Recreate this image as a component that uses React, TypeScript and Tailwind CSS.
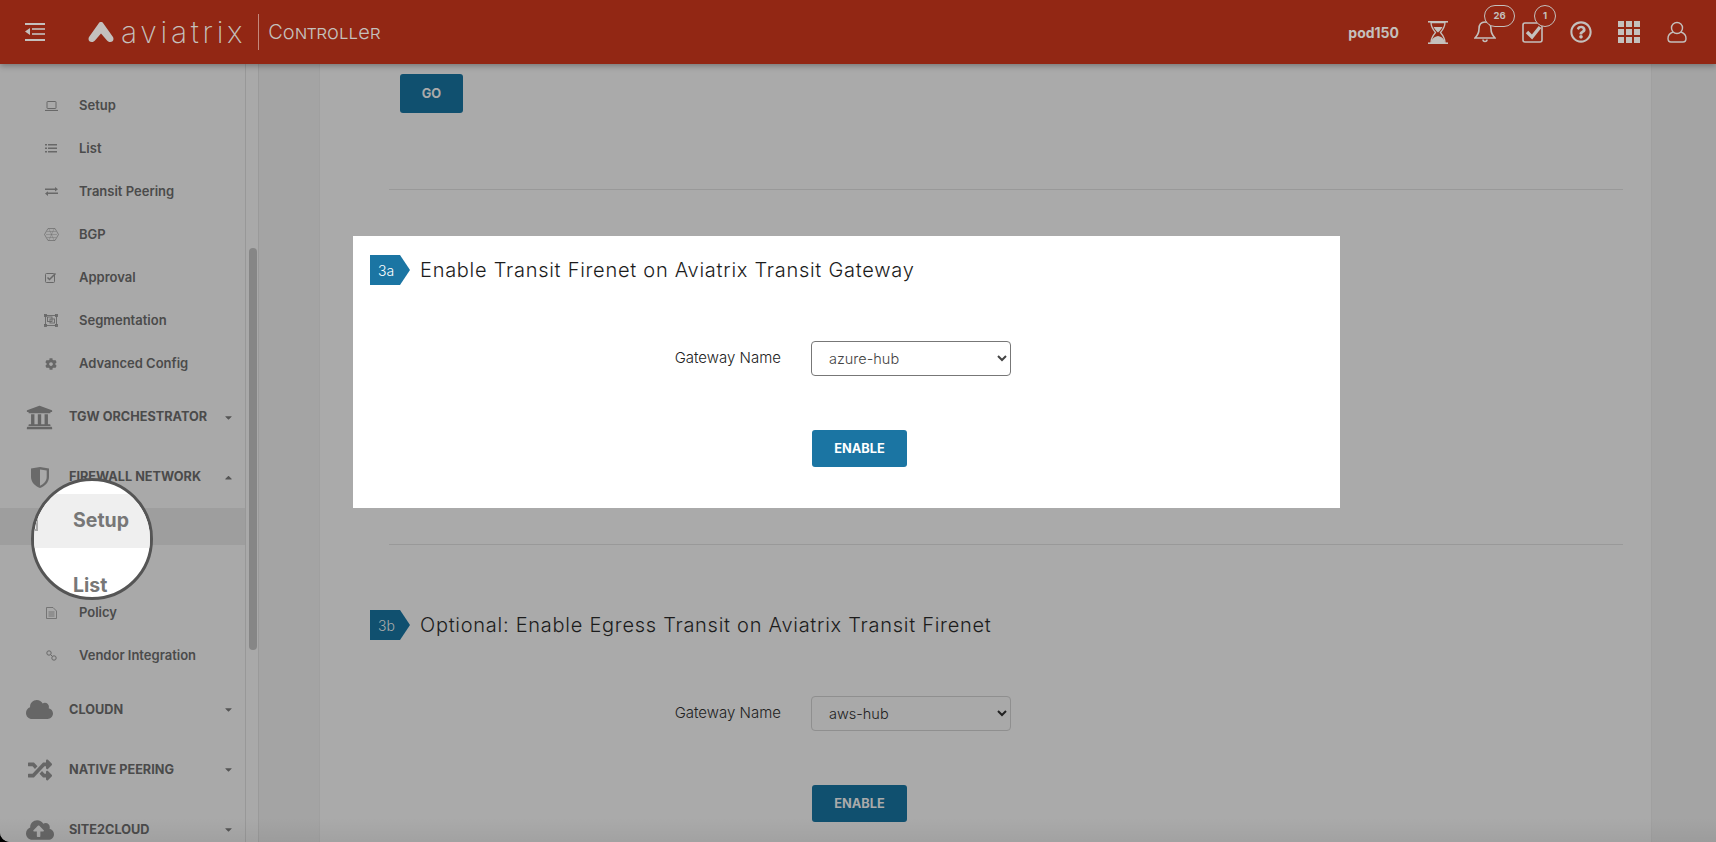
// Aviatrix Controller: Firewall Network setup, step 3a spotlighted
import type { ReactNode } from 'react'
import { FaCaretDown, FaCaretUp, FaCloud, FaCloudUploadAlt, FaCog, FaRandom, FaRegQuestionCircle, FaUniversity } from 'react-icons/fa'

function LaptopIcon() {
  return (
    <svg width="13" height="10" viewBox="0 0 13 10" fill="none" stroke="currentColor">
      <rect x="2" y="0.5" width="9" height="7" rx="0.5" />
      <path d="M0 9.500h13" strokeWidth="1.2" />
    </svg>
  )
}

function ListIcon() {
  return (
    <svg width="12" height="9" viewBox="0 0 12 9" fill="currentColor">
      <rect x="0" y="0" width="2" height="1.500" />
      <rect x="3" y="0" width="9" height="1.500" />
      <rect x="0" y="3.500" width="2" height="1.500" />
      <rect x="3" y="3.500" width="9" height="1.500" />
      <rect x="0" y="7" width="2" height="1.500" />
      <rect x="3" y="7" width="9" height="1.500" />
    </svg>
  )
}

function SwapIcon() {
  return (
    <svg width="13" height="9" viewBox="0 0 13 9" fill="currentColor">
      <path d="M0 1.500h10V0l3 2.200-3 2.200V3H0zM13 5.500H3V4.200L0 6.500 3 9V7h10z" />
    </svg>
  )
}

function HexIcon() {
  return (
    <svg width="15" height="13" viewBox="0 0 15 13" fill="none" stroke="currentColor" strokeWidth="0.7">
      <path d="M4 .5h7l3.500 6-3.500 6H4L.5 6.500z" />
      <path d="M3 3.500h9M2 6.500h11M3 9.500h9M5 1l5 11M10 1L5 12" opacity="0.55" />
    </svg>
  )
}

function ApprovalIcon() {
  return (
    <svg width="12" height="11" viewBox="0 0 12 11" fill="none" stroke="currentColor">
      <rect x="0.5" y="1.500" width="9" height="9" rx="1" />
      <path d="M2.500 5.500l2 2L10.500 1.500" strokeWidth="1.500" />
    </svg>
  )
}

function SegmentIcon() {
  return (
    <svg width="14" height="13" viewBox="0 0 14 13" fill="none" stroke="currentColor" strokeWidth="0.9">
      <rect x="1.500" y="1.500" width="11" height="10" />
      <rect x="0.500" y="0.500" width="2" height="2" />
      <rect x="11.500" y="0.500" width="2" height="2" />
      <rect x="0.500" y="10.500" width="2" height="2" />
      <rect x="11.500" y="10.500" width="2" height="2" />
      <rect x="3.500" y="3" width="4.500" height="4.500" />
      <rect x="6" y="5" width="4.500" height="4" />
    </svg>
  )
}

function PolicyIcon() {
  return (
    <svg width="11" height="12" viewBox="0 0 11 12" fill="none" stroke="currentColor" strokeWidth="0.8">
      <path d="M.5.500h6.500l3.500 3.500v7.500H.5z" />
      <path d="M2.500 5h6M2.500 7h6M2.500 9h6" />
    </svg>
  )
}

function ChainIcon() {
  return (
    <svg width="11" height="11" viewBox="0 0 11 11" fill="none" stroke="currentColor">
      <circle cx="3" cy="3" r="2.200" />
      <circle cx="8" cy="8" r="2.200" />
      <path d="M4.500 4.500l2 2" />
    </svg>
  )
}

function ShieldIcon() {
  return (
    <svg width="18" height="21" viewBox="0 0 18 21">
      <path d="M0 1.500C3 1 6 .5 9 0c3 .5 6 1 9 1.500V10c0 5-4 9-9 11-5-2-9-6-9-11z" fill="#6a6a6a" />
      <path d="M9 2.500c2.300.3 4.500.7 6.700 1V10c0 4-3 7-6.700 8.700z" fill="#a9a9a9" />
    </svg>
  )
}

function HourglassIcon() {
  return (
    <svg width="20" height="23" viewBox="0 0 20 23" fill="currentColor">
      <rect x="0" y="0" width="20" height="1.600" />
      <rect x="0" y="21.400" width="20" height="1.600" />
      <path d="M3 1.500h14c0 4.500-2 7-4.500 10 2.500 3 4.500 5.500 4.500 10H3c0-4.500 2-7 4.500-10C5 8.500 3 6 3 1.500z" fill="none" stroke="currentColor" strokeWidth="1.300" />
      <path d="M5.500 6h9c-.8 1.800-2.600 3.700-4.500 5.500C8.100 9.700 6.300 7.800 5.500 6zM3.500 21c.2-2.800 1.500-4.800 6.500-6 5 1.200 6.300 3.200 6.500 6z" />
    </svg>
  )
}

function SubItem({ icon, label }: { icon: ReactNode; label: string }) {
  return (
    <div className="flex h-[43px] items-center">
      <span className="flex w-[79px] justify-center pl-[23px] text-[#686868]">{icon}</span>
      <span className="text-[13px] font-semibold text-[#4b4b4b]">{label}</span>
    </div>
  )
}

function GroupItem({ icon, label, open }: { icon: ReactNode; label: string; open?: boolean }) {
  return (
    <div className="flex h-[60px] items-center">
      <span className="flex w-[69px] justify-center pl-[10px] text-[#666]">{icon}</span>
      <span className="flex-1 text-[12.7px] font-bold text-[#4b4b4b]">{label}</span>
      <span className="mr-[11px] text-[#555]">{open ? <FaCaretUp size={11} /> : <FaCaretDown size={11} />}</span>
    </div>
  )
}

function Sidebar() {
  return (
    <aside className="h-full w-[246px] shrink-0 border-r border-[#989898] bg-[#a9a9a9] pt-[20px]">
      <SubItem icon={<LaptopIcon />} label="Setup" />
      <SubItem icon={<ListIcon />} label="List" />
      <SubItem icon={<SwapIcon />} label="Transit Peering" />
      <SubItem icon={<HexIcon />} label="BGP" />
      <SubItem icon={<ApprovalIcon />} label="Approval" />
      <SubItem icon={<SegmentIcon />} label="Segmentation" />
      <SubItem icon={<FaCog size={12} />} label="Advanced Config" />
      <div className="h-[2px]" />
      <GroupItem icon={<FaUniversity size={27} />} label="TGW ORCHESTRATOR" />
      <GroupItem icon={<ShieldIcon />} label="FIREWALL NETWORK" open />
      <div className="-mt-[2px] flex h-[43px] items-center">
        <div className="h-[37px] w-full bg-[#9e9e9e]" />
      </div>
      {/* the List row sits under the magnifier */}
      <div className="h-[43px]" />
      <SubItem icon={<PolicyIcon />} label="Policy" />
      <SubItem icon={<ChainIcon />} label="Vendor Integration" />
      <div className="h-[2.5px]" />
      <GroupItem icon={<FaCloud size={27} />} label="CLOUDN" />
      <GroupItem icon={<FaRandom size={24} />} label="NATIVE PEERING" />
      <GroupItem icon={<FaCloudUploadAlt size={28} />} label="SITE2CLOUD" />
    </aside>
  )
}

function Magnifier() {
  return (
    <div className="absolute left-[31px] top-[478px] z-20 h-[122px] w-[122px] overflow-hidden rounded-full border-[3px] border-[#555] bg-white">
      <div className="mt-[13px] flex h-[54px] items-center bg-[#efefef] pl-[39px] pb-[1px] text-[19.5px] font-bold text-[#777]">
        Setup
      </div>
      <div className="mt-[23px] pl-[39px] text-[19.5px] font-bold text-[#777]">List</div>
      <span className="absolute left-[-6px] top-[30px] h-[20px] w-[10px] border-r-2 border-b-2 border-[#aaa]" />
    </div>
  )
}

function StepHeader({ step, title, dim }: { step: string; title: string; dim?: boolean }) {
  return (
    <div className="flex h-[30px] items-center">
      <span
        className={`flex h-[30px] w-[40px] items-center pl-[8px] text-[14px] font-light [clip-path:polygon(0_0,75%_0,100%_50%,75%_100%,0_100%)] ${
          dim ? 'bg-[#10506f] text-[#aaa]' : 'bg-[#1b75a3] text-white'
        }`}
      >
        {step}
      </span>
      <h2 className="ml-[10px] text-[20px] font-light tracking-[0.73px] text-[#1c1c1c]">{title}</h2>
    </div>
  )
}

function GatewayRow({ value, dim }: { value: string; dim?: boolean }) {
  return (
    <div className="flex h-[35px] items-center">
      <label className="w-[411px] text-right text-[15px] font-light text-[#222]">Gateway Name</label>
      <select
        defaultValue={value}
        className={`ml-[30px] h-[35px] w-[200px] rounded-[4px] border pl-[13px] text-[14.5px] font-light ${
          dim ? 'border-[#8f8f8f] bg-[#a9a9a9] text-[#222]' : 'border-[#777] bg-white text-[#444]'
        }`}
      >
        <option>{value}</option>
      </select>
    </div>
  )
}

function EnableButton({ dim }: { dim?: boolean }) {
  return (
    <button
      className={`ml-[442px] block h-[37px] w-[95px] rounded-[3px] text-[12.8px] font-bold ${
        dim ? 'bg-[#10506f] text-[#aaa]' : 'bg-[#1b75a3] text-white'
      }`}
    >
      ENABLE
    </button>
  )
}

function Main() {
  return (
    <main className="h-full flex-1 bg-[#a4a4a4] pl-[60px] pr-[64px]">
      <div className="h-full overflow-hidden border-x border-[#a0a0a0] bg-[#aaaaaa] pl-[33px] pt-[10px]">
        <button className="ml-[47px] block h-[39px] w-[63px] rounded-[3px] bg-[#10506f] pt-[1px] text-[12.8px] font-bold text-[#aaa]">
          GO
        </button>
        <hr className="ml-[36px] mt-[76px] w-[1234px] border-[#999]" />
        <section className="relative z-10 mt-[46px] h-[272px] w-[987px] bg-white px-[17px] pt-[19px]">
          <StepHeader step="3a" title="Enable Transit Firenet on Aviatrix Transit Gateway" />
          <div className="mt-[56px]">
            <GatewayRow value="azure-hub" />
          </div>
          <div className="mt-[54px]">
            <EnableButton />
          </div>
        </section>
        <hr className="ml-[36px] mt-[36px] w-[1234px] border-[#999]" />
        <section className="mt-[65px] px-[17px]">
          <StepHeader step="3b" title="Optional: Enable Egress Transit on Aviatrix Transit Firenet" dim />
          <div className="mt-[56px]">
            <GatewayRow value="aws-hub" dim />
          </div>
          <div className="mt-[54px]">
            <EnableButton dim />
          </div>
        </section>
      </div>
    </main>
  )
}

function Header() {
  return (
    <header className="relative z-30 flex h-[64px] shrink-0 items-center bg-[#922714] text-[#c4c0bd] shadow-[0_2px_6px_rgba(0,0,0,0.3)]">
      <svg width="20" height="18" viewBox="0 0 20 18" className="ml-[25px]" fill="currentColor">
        <rect y="0" width="20" height="2" />
        <rect x="7" y="5.200" width="13" height="1.600" />
        <rect x="7" y="10.200" width="13" height="1.600" />
        <rect y="16" width="20" height="2" />
        <path d="M5 5v7L0 8.500z" />
      </svg>
      <svg width="26" height="20" viewBox="0 0 26 20" className="ml-[43px]" fill="currentColor">
        <path d="M13 0c1 0 1.800.5 2.400 1.400l9.400 13.400c1.600 2.400.2 5.200-2.600 5.200-1.500 0-2.400-.6-3.400-1.800L13 11.600l-5.800 6.600C6.200 19.400 5.300 20 3.800 20 1 20-.4 17.200 1.200 14.800l9.400-13.400C11.200.5 12 0 13 0z" />
      </svg>
      <span className="ml-[7px] text-[30px] font-extralight leading-none tracking-[3.7px]">aviatrix</span>
      <span className="ml-[12px] h-[36px] w-px bg-[#c4887c]" />
      <span className="ml-[9px] text-[20px] font-light [font-variant:small-caps]">Controller</span>

      <div className="ml-auto flex items-center">
        <span className="mr-[29px] text-[14px] font-bold">pod150</span>
        <HourglassIcon />
        <div className="relative ml-[26px] mr-[26px]">
          <svg width="22" height="24" viewBox="0 0 22 24" fill="none" stroke="currentColor" strokeWidth="1.600">
            <path d="M11 2c-4 0-6 3-6 7 0 5-2 7-4 9h20c-2-2-4-4-4-9 0-4-2-7-6-7z" />
            <path d="M9 19.500a2 2 0 0 0 4 0" />
          </svg>
          <span className="absolute left-[10px] top-[-15px] flex h-[22px] w-[31px] items-center justify-center rounded-full border border-[#c4c0bd] bg-[#922714] text-[9.500px] font-bold">
            26
          </span>
        </div>
        <div className="relative mr-[26px]">
          <svg width="22" height="22" viewBox="0 0 22 22" fill="none" stroke="currentColor">
            <rect x="1" y="2" width="19" height="19" rx="2" strokeWidth="1.600" />
            <path d="M5 11l5 5 8-10" strokeWidth="3.400" />
          </svg>
          <span className="absolute left-[12px] top-[-16px] flex h-[22px] w-[22px] items-center justify-center rounded-full border border-[#c4c0bd] bg-[#922714] text-[9.500px] font-bold">
            1
          </span>
        </div>
        <FaRegQuestionCircle size={22} className="mr-[26px]" />
        <div className="mr-[27px] grid grid-cols-3 gap-[2px]">
          {Array.from({ length: 9 }).map((_, i) => (
            <span key={i} className="h-[6px] w-[6px] bg-current" />
          ))}
        </div>
        <svg width="20" height="22" viewBox="0 0 20 22" className="mr-[29px]" fill="none" stroke="currentColor" strokeWidth="1.400">
          <circle cx="10" cy="7" r="5.500" />
          <path d="M6 11c-3 1-5 3.500-5 6.500C1 20 2.500 21 4 21h12c1.500 0 3-1 3-3.500 0-3-2-5.500-5-6.500" />
        </svg>
      </div>
    </header>
  )
}

export default function App() {
  return (
    <div className="bg-black">
      <div className="relative flex h-[842px] w-[1716px] flex-col overflow-hidden rounded-bl-[10px] bg-[#a9a9a9] font-[Inter,sans-serif]">
        <Header />
        <div className="flex min-h-0 flex-1">
          <Sidebar />
          {/* sidebar scrollbar gutter */}
          <div className="h-full w-[13px] shrink-0 border-r border-[#9a9a9a] bg-[#a9a9a9] pl-[3px] pt-[184px]">
            <div className="h-[402px] w-[8px] rounded-full bg-[#868686]" />
          </div>
          <Main />
        </div>
        <div className="pointer-events-none absolute inset-x-0 bottom-0 z-10 h-[24px] bg-gradient-to-b from-transparent to-black/5" />
        <Magnifier />
      </div>
    </div>
  )
}
